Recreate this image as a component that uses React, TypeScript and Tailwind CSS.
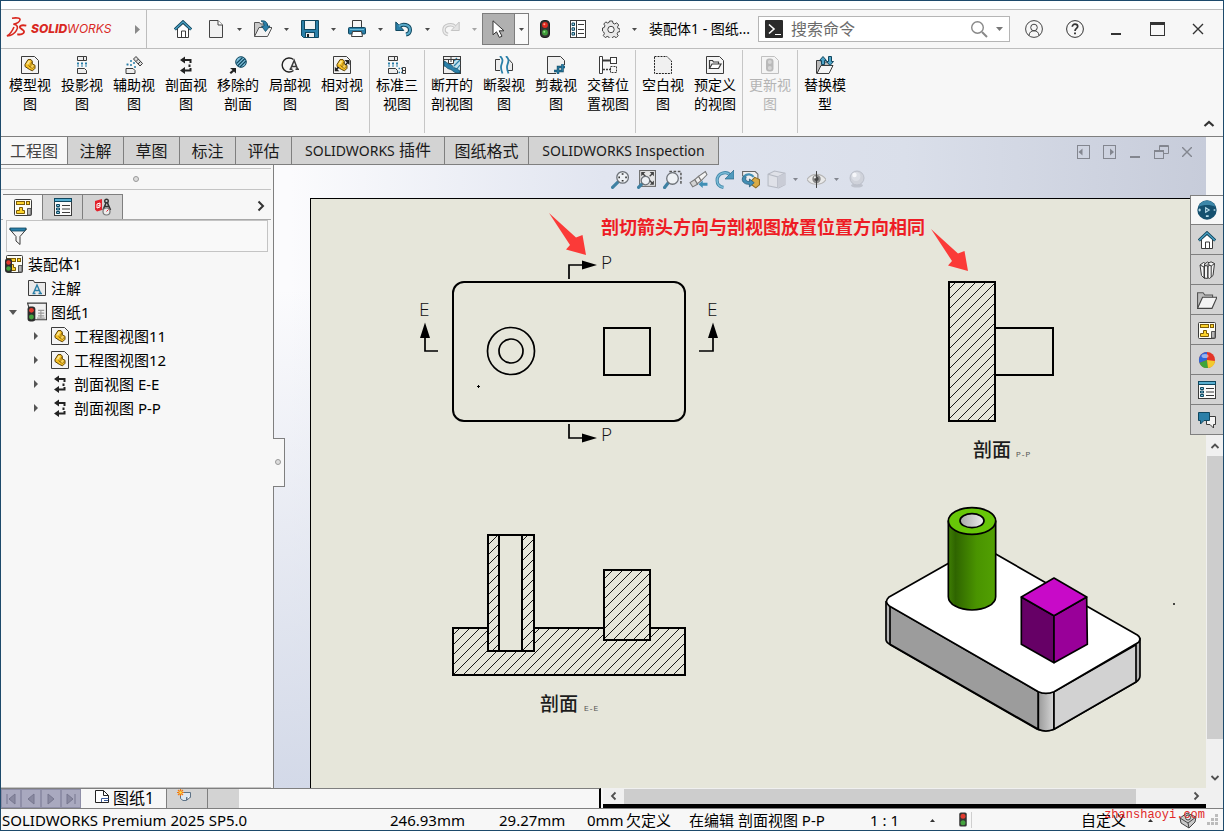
import React from "react";
import type { ReactNode } from "react";

const INK = "#3b3b3b";
const BLUE = "#2a7fa8";
const NAVY = "#10475f";

function Svg({ children, size = 18, className = "" }: { children: ReactNode; size?: number; className?: string }) {
  return (
    <svg width={size} height={size} viewBox="0 0 18 18" fill="none" aria-hidden="true" className={"shrink-0 " + className}>
      {children}
    </svg>
  );
}

function Caret({ color = "#4a4a4a" }: { color?: string }) {
  return (
    <svg width="5" height="3" viewBox="0 0 5 3" aria-hidden="true">
      <path d="M0 0h5L2.500 3z" fill={color} />
    </svg>
  );
}

/* ---------- shared icons ---------- */

const HouseIcon = () => (
  <Svg>
    <path d="M3.500 8.500V17.500h11V8.500L9 3.500z" fill="#fff" stroke={INK} />
    <path d="M7.500 17v-6h4v6" stroke={INK} />
    <path d="M.800 9.500L9 1.800l8.200 7.700" stroke={NAVY} strokeWidth="3" />
    <path d="M1.200 9.200L9 1.800l7.800 7.400" stroke="#4ca3c6" strokeWidth="1.200" />
  </Svg>
);

const TrafficIcon = () => (
  <Svg>
    <rect x="4.500" y="0.500" width="9" height="17" rx="3.500" fill="#333" stroke="#1d1d1d" />
    <circle cx="9" cy="5" r="2.900" fill="#e02a20" />
    <circle cx="8.300" cy="4.300" r="1" fill="#ff9f90" />
    <circle cx="9" cy="12.500" r="2.900" fill="#3f9b3a" />
    <circle cx="8.300" cy="11.800" r="1" fill="#9be08e" />
  </Svg>
);

const PartShape = () => (
  <>
    <path d="M4 8.500L7 3.600h3l1.300 1.600V8l2.700 1.300v3l-2.500 2.500L8.500 13.500 4 10.500z" fill="#f5bf22" stroke="#5e4206" />
    <path d="M7.300 4.800h2.200L7.500 8.500 5.200 8.300z" fill="#fde58a" />
    <path d="M10.800 8.300L9 11l2.500 1.500 2-2.500" fill="#f9d35a" stroke="#8a6308" strokeWidth=".7" />
    <path d="M7.500 8.800l1.300 2.200M11 5.500L9.500 8.500" stroke="#8a6308" strokeWidth=".8" />
  </>
);

const ModelViewIcon = () => (
  <Svg>
    <path d="M.5.500h13l4 4v13H.500z" fill="#f4f4f4" stroke={INK} />
    <PartShape />
  </Svg>
);

const SectionIcon = () => (
  <Svg>
    <path d="M7 4h6.500v3M12.500 8.500v2.500M13.500 12v2.500H7" stroke="#222" strokeWidth="2" />
    <path d="M3 4L8 .5v7zM3 14.500L8 11v7z" fill="#222" />
  </Svg>
);

const FormatShapes = () => (
  <>
    <rect x="2.500" y="3.500" width="8" height="3" fill="#fcd32b" stroke="#7d5c06" />
    <rect x="12.500" y="3.500" width="3" height="3" fill="#fcd32b" stroke="#7d5c06" />
    <path d="M5.500 9.500h3v3h2v3h-8v-3h3z" fill="#fcd32b" stroke="#7d5c06" />
    <path d="M13.500 17V10.500H17V17z" fill="#b5b5b5" stroke="#555" />
  </>
);

const FormatIcon = () => (
  <Svg>
    <rect x=".5" y="1.500" width="17" height="16" rx="1" fill="#fdfdf5" stroke={INK} />
    <FormatShapes />
  </Svg>
);

const AssemblyIcon = () => (
  <Svg>
    <rect x="1.500" y=".5" width="16" height="17" rx="1" fill="#fdfdf5" stroke={INK} />
    <FormatShapes />
    <rect x="0" y="3.500" width="7" height="14" rx="2.500" fill="#2d2d2d" />
    <circle cx="3.500" cy="7.500" r="2.200" fill="#e23a2e" />
    <circle cx="3.500" cy="13.500" r="2.200" fill="#44a23e" />
  </Svg>
);

const SheetIcon = () => (
  <Svg size={20}>
    <path d="M.500 1h17v15H5z" fill="#f0f0f0" stroke={INK} />
    <path d="M10 7.500h5.500M10 10h5.500M10 12.500h5.500M12.500 7.500v7M9 14.500h7" stroke="#999" />
    <rect x=".5" y="4" width="7" height="13.500" rx="2.500" fill="#2d2d2d" />
    <circle cx="4" cy="7.500" r="2.200" fill="#e23a2e" />
    <circle cx="4" cy="13.500" r="2.200" fill="#44a23e" />
  </Svg>
);

const AnnotationFolderIcon = () => (
  <Svg>
    <path d="M.5 16.500V1.500h5l1 2h11v13z" fill="#e9e9e9" stroke={INK} />
    <path d="M5.500 14L9 6l3.500 8M7 11.500h4M4.500 14.500h3M10.500 14.500h3.500" stroke={BLUE} strokeWidth="1.400" />
  </Svg>
);

const PropertyListIcon = () => (
  <Svg>
    <rect x=".5" y=".5" width="17" height="17" fill="#fafafa" stroke={INK} />
    <rect x="0" y="0" width="18" height="4" fill={NAVY} />
    <path d="M1 2h16" stroke="#58afd1" strokeWidth="2" />
    <path d="M2.500 6.500h3v2h-3zM2.500 10h3v2h-3zM2.500 13.500h3v2h-3z" fill="#7cc2dd" stroke={NAVY} />
    <path d="M8 7.500h8M8 11h8M8 14.500h8" stroke={INK} />
  </Svg>
);

/* ---------- title bar icons ---------- */

const NewIcon = () => (
  <Svg>
    <path d="M2.500.500h8.500l4.500 4.500v12.500h-13z" fill="#f1f1f1" stroke="#444" />
    <path d="M11 .5V5h4.500" fill="#fff" stroke="#444" />
  </Svg>
);

const OpenIcon = () => (
  <Svg>
    <path d="M.5 16.500V2.500h5l1 1.500h7v4" fill="#c9c9c9" stroke="#555" />
    <path d="M.5 16.500L5 7.500h13l-4.500 9z" fill="#f2f2f2" stroke="#555" />
    <path d="M7 1c4-.8 6.500 1 6.500 5h2.500l-4.500 5.500L7.500 6H10c0-3-1-4.300-3-5z" fill={BLUE} stroke={NAVY} strokeWidth=".8" />
  </Svg>
);

const SaveIcon = () => (
  <Svg>
    <path d="M.5.500h17v17h-15l-2-2z" fill={BLUE} stroke={NAVY} />
    <rect x="3.500" y=".5" width="11" height="9" fill="#f1f4f5" stroke={NAVY} />
    <rect x="4.500" y="12.500" width="9" height="5" fill="#eee" stroke={NAVY} />
    <rect x="6" y="14" width="2" height="3" fill="#222" />
  </Svg>
);

const PrintIcon = () => (
  <Svg>
    <path d="M4.500 8V.500h9V8" fill="#f5f5f5" stroke={INK} />
    <rect x=".5" y="7.500" width="17" height="6.500" rx="1" fill={BLUE} stroke={NAVY} />
    <path d="M2 9.500h14" stroke="#6fbcd9" />
    <path d="M3.500 16.500l1-5h9l1 5z" fill="#fff" stroke={INK} />
  </Svg>
);

const UndoIcon = () => (
  <Svg>
    <path d="M5 6.500c2-3 10-2 10 3.500 0 2.500-1.500 4-4 4.500" stroke={NAVY} strokeWidth="4" />
    <path d="M.800 2v8.500h8L3.500 4.500z" fill={BLUE} stroke={NAVY} />
    <path d="M4 6.500c3-3 11-2 11 3.500 0 2.500-1.500 4-4 4.500" stroke="#58a9c9" strokeWidth="2" />
  </Svg>
);

const RedoIcon = () => (
  <Svg>
    <path d="M13 6.500c-3-3-11-2-11 3.500 0 2.500 1.500 4 4 4.500" stroke="#c4c4c4" strokeWidth="3.500" />
    <path d="M17.200 2v8.500h-8z" fill="#e4e4e4" stroke="#c4c4c4" />
    <path d="M13 6.500c-3-3-11-2-11 3.500 0 2.500 1.500 4 4 4.500" stroke="#ebebeb" strokeWidth="1.500" />
  </Svg>
);

const ListIcon = () => (
  <Svg>
    <rect x="1.500" y=".5" width="15" height="17" fill="#fff" stroke={INK} />
    <path d="M7.500 1v16" stroke={INK} />
    <path d="M3 3h2.500v2.500H3zM3 7.800h2.500v2.500H3zM3 12.600h2.500v2.500H3z" fill="#9bd3e8" stroke={NAVY} />
    <path d="M9 4.500h6M9 9.500h6M9 13.500h6" stroke={INK} />
  </Svg>
);

const GearIcon = () => (
  <Svg>
    <path
      d="M7.500 1h3l.5 2.200 1.700.8L14.700 2.800l2 2.200-1.200 1.900.6 1.600 1.900.5v2.500l-2.100.6-.8 1.700 1.100 1.900-2 2-1.900-1.200-1.700.7-.6 1.800H7.500l-.6-1.900-1.700-.7-1.900 1.200-2-2 1.100-1.900-.7-1.700L.5 11V8l1.700-.5.7-1.700L1.800 4l2-2.100L5.600 3l1.500-.6z"
      fill="#e9e9e9"
      stroke="#444"
    />
    <circle cx="9" cy="9.500" r="3.200" fill="#f7f7f7" stroke="#444" />
  </Svg>
);

const CursorIcon = () => (
  <svg width="14" height="18" viewBox="0 0 14 18" aria-hidden="true">
    <path d="M1 .8v14l3.500-3 2.800 5.600 2.700-1.200-2.800-5.400H12z" fill="#fff" stroke="#333" />
  </svg>
);

/* ---------- ribbon icons ---------- */

const ProjectedIcon = () => (
  <Svg>
    <path d="M4.500.500h6v4h-6zM10.500.500h3v4h-3z" fill="#eee" stroke={INK} />
    <path d="M5 6.500v4M9 6.500v4M13 6.500v4" stroke={BLUE} strokeWidth="2" strokeDasharray="2 1" />
    <path d="M4.500 12.500h7l2 2v3h-9z" fill="#eee" stroke={INK} />
  </Svg>
);

const AuxiliaryIcon = () => (
  <Svg>
    <path d="M8.500 3L11 .5l6.500 7L15 10z" fill="#ddd" stroke={INK} />
    <path d="M11 5.500l2.500-2.500M13 8l2.500-2.500" stroke={INK} />
    <path d="M1.500 8.500h2M5 5h2M5 9h2M8 7h2M9 11h2M2.500 7.500v2" stroke={BLUE} strokeWidth="1.600" />
    <path d="M1 12.500h7l2 2v3H1z" fill="#eee" stroke={INK} />
  </Svg>
);

const RemovedIcon = () => (
  <Svg>
    <circle cx="12" cy="6" r="5.300" fill="#7fc0dc" stroke={NAVY} />
    <path d="M7.500 7.500L13.500 1.500M8.500 10L16 2.500M11 11L17 5" stroke={NAVY} strokeWidth="1.200" />
    <path d="M1 12h6v5.500L5 15.500 2 18l-1.500-1.500 3-2.500z" fill="#222" />
  </Svg>
);

const DetailIcon = () => (
  <Svg>
    <path d="M12.500 3.500A7 7 0 1 0 12.500 14.500" stroke="#222" strokeWidth="1.400" />
    <path d="M9.500 13L13.200 4.500 16.500 13M10.500 10.500h5M8.500 13.200h3M14.500 13.200h3.500" stroke={INK} strokeWidth="1.500" />
  </Svg>
);

const RelativeIcon = () => (
  <Svg>
    <path d="M.5.500h13l4 4v13H.500z" fill="#f4f4f4" stroke={INK} />
    <PartShape />
    <path d="M11.500 4h5v5l-1.700-1.500-2 2-1-1 2-2zM1.800 10.800l1.500 1.500 1.700-1.700 1.200 1.200-1.700 1.700L6.300 15.300H1.800z" fill="#222" />
  </Svg>
);

const StandardThreeIcon = () => (
  <Svg>
    <path d="M.5.500h6v4h-6zM6.500.500h3v4h-3z" fill="#eee" stroke={INK} />
    <path d="M1 6.500v4M5 6.500v4M9 6.500v4" stroke={BLUE} strokeWidth="2" strokeDasharray="2 1" />
    <path d="M.5 12.500h7l2 2v3h-9z" fill="#eee" stroke={INK} />
    <path d="M10.500 12.500h4M10.500 16.500h4" stroke={BLUE} strokeWidth="1.500" strokeDasharray="1.500 1" />
    <path d="M14.500 11.500h3v6h-3zM14.500 14.500h3" stroke={INK} />
  </Svg>
);

const BrokenSectionIcon = () => (
  <Svg>
    <rect x=".5" y=".5" width="17" height="17" fill="#eee" stroke={INK} />
    <path d="M11 4h6v12l-3-2-4-4z" fill="#c2e2ee" />
    <path d="M11 10l6-6M13 14l4-5M14 2l-3 3" stroke={BLUE} strokeWidth="1.200" />
    <path d="M1 5c2 0 3 3 6 3 2 0 3 4 5 4s3 2 5 3v2h-3C10 16.500 9 13 6 13 3.500 12.500 3 10 1 10z" fill={BLUE} stroke={NAVY} strokeWidth=".7" />
    <path d="M5.500 3.500v4h5v-4" fill="#fff" stroke={INK} />
    <path d="M1 3.500h16M8 1v5" stroke={INK} />
  </Svg>
);

const BreakIcon = () => (
  <Svg>
    <path d="M5 3.500H.500v11H5M13 3.500h1l3.500 4v7H13" fill="#eee" stroke={INK} />
    <path d="M5 0c3 3 3 4.500 1.500 8.500C5.500 11 6 14 7.500 17.500M11 0c3 3 3 4.500 1.500 8.500C11.500 11 12 14 13.500 17.500" stroke={BLUE} strokeWidth="1.800" />
  </Svg>
);

const CropIcon = () => (
  <Svg>
    <path d="M.5.500h13l4 4v13H.500z" fill="#f0f0f0" />
    <path d="M9 17.500H.500V.500h13l4 4V9" stroke={INK} />
    <path d="M7 15h8.500V8M11 18v-7H18" stroke={NAVY} strokeWidth="2.400" />
    <path d="M7 15h8.500V8M11 18v-7H18" stroke={BLUE} strokeWidth="1.200" />
  </Svg>
);

const AlternateIcon = () => (
  <Svg>
    <path d="M.5.500h3v17h-3z" fill="#fff" stroke={INK} />
    <path d="M3.500 4.500H12" stroke={INK} strokeWidth="2" />
    <rect x="11.500" y="1.500" width="6" height="6" fill="#fff" stroke={INK} />
    <path d="M4 13.500h8" stroke={INK} strokeWidth="1.500" strokeDasharray="2 1" />
    <rect x="11.500" y="10.500" width="6" height="6" stroke={INK} strokeDasharray="2 1" />
  </Svg>
);

const EmptyViewIcon = () => (
  <Svg>
    <path d="M.5.500h12.500l4.500 4.500v12.500H.500z" fill="#f0f0f0" stroke="#222" strokeDasharray="2 1" />
  </Svg>
);

const PredefinedIcon = () => (
  <Svg>
    <path d="M.5.500h13l4 4v13H.500z" fill="#f4f4f4" stroke={INK} />
    <path d="M3.500 12.500v-8h3l1 1.500h5v2" stroke={INK} strokeWidth="1.200" />
    <path d="M3.500 12.500L6 8h9l-2.500 4.500z" fill="#fff" stroke={INK} strokeWidth="1.200" />
  </Svg>
);

const UpdateIcon = () => (
  <Svg>
    <path d="M.5.500h13l4 4v13H.500z" fill="#f4f4f4" stroke="#c0c0c0" />
    <rect x="5" y="2.500" width="7.500" height="13" rx="3" fill="#b9b9b9" />
    <circle cx="8.800" cy="6" r="2" fill="#d5d5d5" />
    <circle cx="8.800" cy="12" r="2" fill="#d5d5d5" />
  </Svg>
);

const ReplaceIcon = () => (
  <Svg>
    <path d="M.5 17.500V4.500h4l1 1.500h8v3" fill="#bbb" stroke={INK} />
    <path d="M1 17.500L5 9.500h12l-4 8z" fill="#f4f4f4" stroke={INK} />
    <path d="M3.500 4.500L7 .5l3.500 4h-2v4h-3v-4z" fill="#4ea3c6" stroke={NAVY} />
    <path d="M10.500 5.500l3.500 4 3.500-4h-2v-5h-3v5z" fill="#4ea3c6" stroke={NAVY} />
  </Svg>
);

type Command = { label: string; icon: ReactNode; disabled?: boolean };

const ribbonGroups: Command[][] = [
  [
    { label: "模型视图", icon: <ModelViewIcon /> },
    { label: "投影视图", icon: <ProjectedIcon /> },
    { label: "辅助视图", icon: <AuxiliaryIcon /> },
    { label: "剖面视图", icon: <SectionIcon /> },
    { label: "移除的剖面", icon: <RemovedIcon /> },
    { label: "局部视图", icon: <DetailIcon /> },
    { label: "相对视图", icon: <RelativeIcon /> },
  ],
  [{ label: "标准三视图", icon: <StandardThreeIcon /> }],
  [
    { label: "断开的剖视图", icon: <BrokenSectionIcon /> },
    { label: "断裂视图", icon: <BreakIcon /> },
    { label: "剪裁视图", icon: <CropIcon /> },
    { label: "交替位置视图", icon: <AlternateIcon /> },
  ],
  [
    { label: "空白视图", icon: <EmptyViewIcon /> },
    { label: "预定义的视图", icon: <PredefinedIcon /> },
  ],
  [{ label: "更新视图", icon: <UpdateIcon />, disabled: true }],
  [{ label: "替换模型", icon: <ReplaceIcon /> }],
];

function Logo() {
  return (
    <div className="flex items-center text-[#d9281f]">
      <svg width="21" height="20" viewBox="0 0 21 20" fill="none" stroke="currentColor" aria-hidden="true" className="mb-1">
        <path d="M6 1.200C10 .5 14.300.800 14 2.800 13.600 4.700 10.500 6.500 7.500 7.300" strokeWidth="1.600" />
        <path d="M7.500 7.300C11.500 7.800 12.500 10.300 10.500 13.300 8.500 16.600 4.500 18.700 1 19 3.500 17.500 6.500 13.500 8 10" strokeWidth="1.600" />
        <path d="M20.300 8.600C16.500 7.800 14.200 8.300 13.800 10s4.700 2.600 4.300 4.900-3.600 3-6.800 2.400" strokeWidth="1.900" />
      </svg>
      <span className="ml-1 font-['Inter','Open_Sans',sans-serif] text-[12px] italic leading-5">
        <span className="font-extrabold">SOLID</span>
        <span className="font-normal">WORKS</span>
      </span>
    </div>
  );
}

function IconButton({ label, children, className, disabled }: { label: string; children: ReactNode; className: string; disabled?: boolean }) {
  return (
    <button type="button" aria-label={label} disabled={disabled} className={"flex shrink-0 items-center justify-center " + className}>
      {children}
    </button>
  );
}

function TitleBar() {
  return (
    <header className="flex h-10 shrink-0 items-stretch border-y border-[#bdbdbd] bg-[#f7f7f7]">
      <div className="flex w-[146px] shrink-0 items-center justify-between border-r border-[#bdbdbd] pl-[5px]">
        <Logo />
        <IconButton label="展开菜单" className="w-[18px]">
          <svg width="5" height="9" viewBox="0 0 5 9" aria-hidden="true">
            <path d="M0 0l5 4.500L0 9z" fill="#8a8a8a" />
          </svg>
        </IconButton>
      </div>
      <div className="flex shrink-0 items-stretch pl-[18px]">
        <IconButton label="主页" className="w-9"><HouseIcon /></IconButton>
        <IconButton label="新建" className="w-[30px]"><NewIcon /></IconButton>
        <IconButton label="新建选项" className="w-4"><Caret /></IconButton>
        <IconButton label="打开" className="w-[31px]"><OpenIcon /></IconButton>
        <IconButton label="打开选项" className="w-4"><Caret /></IconButton>
        <IconButton label="保存" className="w-[31px]"><SaveIcon /></IconButton>
        <IconButton label="保存选项" className="w-4"><Caret /></IconButton>
        <IconButton label="打印" className="w-[31px]"><PrintIcon /></IconButton>
        <IconButton label="打印选项" className="w-4"><Caret /></IconButton>
        <IconButton label="撤消" className="w-[31px]"><UndoIcon /></IconButton>
        <IconButton label="撤消选项" className="w-4"><Caret /></IconButton>
        <IconButton label="重做" className="w-[31px]" disabled><RedoIcon /></IconButton>
        <IconButton label="重做选项" className="w-4"><Caret color="#a5a5a5" /></IconButton>
        <div className="my-[3px] flex w-[47px] border border-[#7d7d7d]">
          <IconButton label="选择" className="w-8 border-r border-[#7d7d7d] bg-[#b0b0b0]"><CursorIcon /></IconButton>
          <IconButton label="选择选项" className="flex-1 bg-[#fafafa]"><Caret /></IconButton>
        </div>
        <IconButton label="重建模型" className="w-8"><TrafficIcon /></IconButton>
        <IconButton label="文件属性" className="w-[34px]"><ListIcon /></IconButton>
        <IconButton label="选项" className="w-8"><GearIcon /></IconButton>
        <IconButton label="更多选项" className="w-[15px]"><Caret /></IconButton>
      </div>
      <h1 className="ml-[7px] w-[109px] shrink-0 self-center whitespace-nowrap text-[14px] leading-5 text-black">装配体1 - 图纸...</h1>
      <form className="my-1.5 flex w-[252px] items-center border border-[#b5b5b5] bg-white px-1.5" role="search">
        <svg width="18" height="18" viewBox="0 0 18 18" fill="none" aria-hidden="true">
          <rect width="18" height="18" rx="1" fill="#2b2b2b" />
          <path d="M4 4.500l5 4.500-5 4.500" stroke="#fff" strokeWidth="1.600" />
          <path d="M10 14.500h6" stroke="#fff" />
        </svg>
        <input
          type="text"
          aria-label="搜索命令"
          placeholder="搜索命令"
          className="ml-2 w-full min-w-0 flex-1 bg-transparent text-[16px] leading-6 text-black outline-none placeholder:text-[#6b6b6b]"
        />
        <IconButton label="搜索" className="w-4">
          <Svg>
            <circle cx="7.500" cy="7.500" r="5.800" stroke="#888" strokeWidth="1.400" />
            <path d="M12 12l5 5" stroke="#888" strokeWidth="2" />
          </Svg>
        </IconButton>
        <IconButton label="搜索选项" className="-mr-1 ml-1 w-4">
          <svg width="7" height="4" viewBox="0 0 7 4" aria-hidden="true"><path d="M0 0h7L3.500 4z" fill="#777" /></svg>
        </IconButton>
      </form>
      <div className="ml-auto flex pr-[5px]">
        <IconButton label="登录" className="w-[41px]">
          <Svg>
            <circle cx="9" cy="9" r="8.400" stroke="#444" />
            <circle cx="9" cy="7.500" r="3.300" stroke="#444" />
            <path d="M4 15.500c.5-3.300 2-4.700 5-4.700s4.500 1.400 5 4.700" stroke="#444" />
          </Svg>
        </IconButton>
        <IconButton label="帮助" className="w-[41px]">
          <Svg>
            <circle cx="9" cy="9" r="8.400" stroke="#333" />
            <path d="M6.300 6.800c0-3.600 5.400-3.300 5.400-.2C11.700 8.500 9 8.500 9 11" stroke="#333" strokeWidth="1.700" />
            <path d="M9 12.500v1.800" stroke="#333" strokeWidth="1.900" />
          </Svg>
        </IconButton>
        <IconButton label="最小化" className="w-[41px]">
          <Svg><path d="M4 14h10" stroke="#333" strokeWidth="2" /></Svg>
        </IconButton>
        <IconButton label="最大化" className="w-[41px]">
          <Svg>
            <rect x="2.500" y="2.500" width="14" height="13" stroke="#333" />
            <path d="M2 3.500h15" stroke="#333" strokeWidth="3" />
          </Svg>
        </IconButton>
        <IconButton label="关闭" className="w-[41px]">
          <Svg><path d="M4 4l10 10M14 4L4 14" stroke="#333" strokeWidth="1.400" /></Svg>
        </IconButton>
      </div>
    </header>
  );
}

function Ribbon() {
  return (
    <div role="toolbar" aria-label="工程图命令" className="flex h-[88px] shrink-0 items-stretch border-b border-[#7f7f7f] bg-[#f7f7f7] pl-[3px]">
      {ribbonGroups.map((group, index) => (
        <div key={group[0].label} className="flex">
          {index > 0 && <div className="mx-px mb-[3px] mt-px w-px bg-[#c6c6c6]" />}
          {group.map((command) => (
            <button
              key={command.label}
              type="button"
              disabled={command.disabled}
              className={
                "flex w-[52px] flex-col items-center px-[5px] pt-[7px] text-center text-[14px] leading-[19px] " +
                (command.disabled ? "text-[#b4b4b4]" : "text-black")
              }
            >
              {command.icon}
              <span className="mt-px break-all">{command.label}</span>
            </button>
          ))}
        </div>
      ))}
      <IconButton label="折叠功能区" className="mb-2 ml-auto mr-2 self-end">
        <svg width="12" height="8" viewBox="0 0 12 8" fill="none" aria-hidden="true">
          <path d="M1.500 6L6 2l4.500 4" stroke="#333" strokeWidth="2.200" />
        </svg>
      </IconButton>
    </div>
  );
}

const commandTabs: { latin?: string; label?: string; width: string }[] = [
  { label: "工程图", width: "w-[66px]" },
  { label: "注解", width: "w-14" },
  { label: "草图", width: "w-14" },
  { label: "标注", width: "w-14" },
  { label: "评估", width: "w-14" },
  { latin: "SOLIDWORKS", label: " 插件", width: "w-[153px]" },
  { label: "图纸格式", width: "w-[84px]" },
  { latin: "SOLIDWORKS Inspection", width: "w-[190px]" },
];

function TabRow() {
  return (
    <div className="flex h-7 shrink-0 items-stretch">
      <nav role="tablist" aria-label="命令管理器" className="flex border-r border-[#7f7f7f]">
        {commandTabs.map((tab, index) => (
          <button
            key={tab.label ?? tab.latin}
            type="button"
            role="tab"
            aria-selected={index === 0}
            className={
              "whitespace-nowrap border-b border-[#7f7f7f] text-[16px] leading-6 " +
              tab.width +
              (index === 0 ? " bg-[#f7f7f7] text-[#444]" : " border-l bg-[#d3d3d3] text-[#1a1a1a]")
            }
          >
            {tab.latin && <span className="text-[14px]">{tab.latin}</span>}
            {tab.label}
          </button>
        ))}
      </nav>
      <div className="ml-auto flex items-center pr-1.5 pt-0.5">
        <IconButton label="上一窗格" className="w-[26px]">
          <svg width="13" height="14" viewBox="0 0 13 14" fill="none" aria-hidden="true">
            <rect x=".5" y=".5" width="12" height="13" stroke="#83868f" /><path d="M5.500 3.500v7L1.500 7z" fill="#83868f" />
          </svg>
        </IconButton>
        <IconButton label="下一窗格" className="w-[26px]">
          <svg width="13" height="14" viewBox="0 0 13 14" fill="none" aria-hidden="true">
            <rect x=".5" y=".5" width="12" height="13" stroke="#83868f" /><path d="M7 3.500v7L11 7z" fill="#83868f" />
          </svg>
        </IconButton>
        <IconButton label="最小化文档" className="w-[26px]">
          <svg width="10" height="14" viewBox="0 0 10 14" aria-hidden="true"><path d="M0 11h10v2H0z" fill="#83868f" /></svg>
        </IconButton>
        <IconButton label="还原文档" className="w-[26px]">
          <svg width="15" height="14" viewBox="0 0 15 14" fill="none" stroke="#83868f" aria-hidden="true">
            <path d="M5.500 5V.500h9v8H10" /><path d="M5.500 1.500h9" /><rect x=".5" y="5.500" width="9" height="8" /><path d="M.5 6.500h9" />
          </svg>
        </IconButton>
        <IconButton label="关闭文档" className="w-[26px]">
          <svg width="10" height="10" viewBox="0 0 10 10" aria-hidden="true"><path d="M0 0l10 10M10 0L0 10" stroke="#83868f" strokeWidth="1.400" /></svg>
        </IconButton>
      </div>
    </div>
  );
}

type Node = { label: string; icon: ReactNode; level: 0 | 1 | 2; toggle?: "open" | "closed" };

const tree: Node[] = [
  { label: "装配体1", icon: <AssemblyIcon />, level: 0 },
  { label: "注解", icon: <AnnotationFolderIcon />, level: 1 },
  { label: "图纸1", icon: <SheetIcon />, level: 1, toggle: "open" },
  { label: "工程图视图11", icon: <ModelViewIcon />, level: 2, toggle: "closed" },
  { label: "工程图视图12", icon: <ModelViewIcon />, level: 2, toggle: "closed" },
  { label: "剖面视图 E-E", icon: <SectionIcon />, level: 2, toggle: "closed" },
  { label: "剖面视图 P-P", icon: <SectionIcon />, level: 2, toggle: "closed" },
];

const DisplayIcon = () => (
  <Svg>
    <path d="M1 3l7-2v11l-5 1.500-2-2z" fill="#e3212b" />
    <path d="M3 6l3-1M3 6v4l3-1V5M4 8l2-1" stroke="#fff" />
    <circle cx="12.500" cy="3" r="1.800" stroke="#333" strokeWidth="1.400" />
    <path d="M12 5L9 12M13.500 5l3 7M10.500 8.500h4" stroke="#333" strokeWidth="1.600" />
    <circle cx="12.500" cy="13.500" r="3.500" fill="#eee" stroke="#777" strokeWidth="1.200" />
    <path d="M12.500 13.500l2-2" stroke="#e3212b" />
  </Svg>
);

function FeaturePanel() {
  return (
    <aside className="flex w-[273px] shrink-0 flex-col border-r border-[#7f7f7f] bg-[#f7f7f7]">
      <div className="mr-0.5 h-1 border-b border-[#c4c4c4]" />
      <div className="mr-0.5 flex h-[21px] items-center justify-center border-b border-[#c4c4c4]">
        <span className="size-1.5 rounded-full border border-[#999] bg-[#ddd]" />
      </div>
      <div className="mr-0.5 mt-1 flex h-[26px] items-stretch border-b border-[#a8a8a8]">
        <div role="tablist" aria-label="管理器" className="ml-0.5 flex">
          <button type="button" role="tab" aria-selected="true" aria-label="设计树" className="-mb-px flex w-[39px] items-center justify-center border-t border-[#7f7f7f] bg-[#f7f7f7] pb-0.5">
            <FormatIcon />
          </button>
          <button type="button" role="tab" aria-selected="false" aria-label="属性管理器" className="flex w-10 items-center justify-center border-l border-t border-[#7f7f7f] bg-[#d3d3d3]">
            <PropertyListIcon />
          </button>
          <button type="button" role="tab" aria-selected="false" aria-label="显示管理器" className="flex w-[41px] items-center justify-center border-x border-t border-[#7f7f7f] bg-[#d3d3d3]">
            <DisplayIcon />
          </button>
        </div>
        <IconButton label="更多" className="ml-auto w-5 pb-0.5">
          <svg width="8" height="12" viewBox="0 0 8 12" fill="none" aria-hidden="true">
            <path d="M1.500 1.500L6 6l-4.500 4.500" stroke="#333" strokeWidth="2" />
          </svg>
        </IconButton>
      </div>
      <label className="mx-[5px] flex h-8 shrink-0 items-center border border-[#c4c4c4] bg-[#f9f9f9] pl-0.5">
        <Svg>
          <path d="M.5 2h17L11 9.500v8L7 14V9.500z" fill="#f4f4f4" stroke={INK} />
          <path d="M.800 1h16.400l-1.500 3H2.300z" fill={BLUE} stroke={NAVY} strokeWidth=".8" />
        </Svg>
        <input type="text" aria-label="过滤" className="min-w-0 flex-1 bg-transparent px-1 text-[14px] outline-none" />
      </label>
      <ul className="pl-[3px] text-[15px] leading-6 text-black">
        {tree.map((node) => (
          <li key={node.label} className={"flex h-6 items-center " + (node.level === 2 ? "pl-[23px]" : "")}>
            {node.level > 0 && (
              <span className="flex w-[23px] pl-[5px]">
                {node.toggle && (
                  <button type="button" aria-label={(node.toggle === "open" ? "折叠 " : "展开 ") + node.label}>
                    {node.toggle === "open" ? (
                      <svg width="8" height="5" viewBox="0 0 8 5" aria-hidden="true"><path d="M0 0h8L4 5z" fill="#555" /></svg>
                    ) : (
                      <svg width="8" height="8" viewBox="0 0 8 8" aria-hidden="true"><path d="M2 0l4 4-4 4z" fill="#555" /></svg>
                    )}
                  </button>
                )}
              </span>
            )}
            <span className="flex w-5 justify-center">{node.icon}</span>
            <span className="ml-1">{node.label}</span>
          </li>
        ))}
      </ul>
      <div className="mr-0.5 mt-auto h-px bg-[#c4c4c4]" />
    </aside>
  );
}

/* ---------- heads-up view toolbar ---------- */

const Lens = ({ cx = 11, cy = 7, r = 5.5 }: { cx?: number; cy?: number; r?: number }) => (
  <>
    <path d={`M1.500 16.500L${cx - r + 1.5} ${cy + r - 1.5}`} stroke="#3f81a3" strokeWidth="3" strokeLinecap="round" />
    <circle cx={cx} cy={cy} r={r} fill="#eef1f5" stroke="#6d7278" strokeWidth="1.200" />
  </>
);

function ViewToolbar() {
  return (
    <div role="toolbar" aria-label="视图" className="-ml-9 flex h-[33px] shrink-0 items-center justify-center pb-[5px]">
      <IconButton label="局部放大" className="w-[26px]">
        <Svg size={19}><Lens /><path d="M11 3v1.500M11 9.500V11M7 7h1.500M13.500 7H15" stroke="#333" strokeWidth="1.700" /></Svg>
      </IconButton>
      <IconButton label="整屏显示全图" className="w-[26px]">
        <Svg size={19}>
          <rect x="2.500" y=".5" width="15" height="15" fill="#e6e6e6" stroke="#666" />
          <path d="M4 2h4L4 6zM16 2h-4l4 4zM16 14h-4l4-4z" fill="#444" /><path d="M5 3l3 3M15 3l-3 3M15 13l-3-3" stroke="#444" strokeWidth="1.300" />
          <Lens cx={8} cy={10} r={4} />
        </Svg>
      </IconButton>
      <IconButton label="放大选取范围" className="w-[26px]">
        <Svg size={19}><path d="M6 1.500h11v12" stroke="#555" strokeWidth="1.400" strokeDasharray="2.500 1.500" /><Lens cx={9} cy={8} /></Svg>
      </IconButton>
      <IconButton label="上一视图" className="w-[26px]">
        <Svg size={19}>
          <path d="M1 12l2.500 4L8 13.500 5.500 9z" fill="#d4d4d4" stroke="#777" /><path d="M5.500 9L8 13l3.500-3L9 6z" fill="#eee" stroke="#777" /><path d="M9 6l2.500 4L17 4.500 15.500 1.500z" fill="#f4f4f4" stroke="#777" />
          <path d="M9 13.500l4-3.500v2h4.500v3H13v2z" fill="#3f8fb5" />
        </Svg>
      </IconButton>
      <IconButton label="旋转视图" className="w-[26px]">
        <Svg size={19}>
          <path d="M14.500 5C11 .5 2 2.500 2 10c0 4 3 6 6 6.500" stroke="#4287a8" strokeWidth="3" />
          <path d="M14.500 5C11 .5 2 2.500 2 10c0 4 3 6 6 6.500" stroke="#7bbcd8" strokeWidth="1.400" />
          <path d="M18 0v8.500H9.500z" fill="#4f9abd" stroke="#326d8c" strokeWidth=".7" />
        </Svg>
      </IconButton>
      <IconButton label="3D 工程图视图" className="w-[26px]">
        <Svg size={19}>
          <path d="M1.500 6V1.500h12L16 4v9" fill="#eee" stroke="#666" />
          <path d="M10 10l3-3 4.500 2v5L14 17l-4-3z" fill="#d9ab45" stroke="#8b6b24" />
          <path d="M2.500 5.500C-1 10 3 14 8 13.500V16l4.500-4L8 8.500V11c-3 0-4.500-2-3-4.500z" fill="#438fb4" stroke="#28607d" strokeWidth=".8" />
          <path d="M3 6c3-3 7-2 9 .5" stroke="#438fb4" strokeWidth="2" />
        </Svg>
      </IconButton>
      <IconButton label="显示样式" className="w-[26px]">
        <Svg size={19}>
          <path d="M1 4l6-3 10 2v11l-6 3-10-2z" fill="#dfe1e8" stroke="#b6bac4" /><path d="M1 4l9 2.500L17 3M10 6.500V17" stroke="#b6bac4" /><path d="M10 6.500L17 3v11l-7 3z" fill="#c9ccd6" />
        </Svg>
      </IconButton>
      <IconButton label="显示样式选项" className="w-3"><Caret color="#83868f" /></IconButton>
      <IconButton label="隐藏/显示项目" className="w-[30px]">
        <Svg size={19}>
          <path d="M0 9c4-6.500 14-6.500 18 0-4 6-14 6-18 0z" fill="#e9e9e9" stroke="#b5b5b5" /><circle cx="9" cy="8.500" r="4" fill="#8a8a8a" /><circle cx="9" cy="8.500" r="2" fill="#444" /><path d="M9 1v16" stroke="#444" />
          <circle cx="7.500" cy="7" r="1" fill="#eee" />
        </Svg>
      </IconButton>
      <IconButton label="隐藏/显示选项" className="w-2.5"><Caret color="#83868f" /></IconButton>
      <IconButton label="编辑外观" className="w-8">
        <Svg>
          <ellipse cx="9" cy="15.500" rx="6" ry="2" fill="#bfc3cd" />
          <circle cx="9" cy="8" r="7" fill="#cfd2da" stroke="#bcc0ca" /><circle cx="8" cy="6.500" r="4.500" fill="#dcdfe6" /><circle cx="6.500" cy="5" r="2.200" fill="#f6f7fa" />
        </Svg>
      </IconButton>
    </div>
  );
}

function Drawing() {
  return (
    <svg width="895" height="589" viewBox="311 199 895 589" fill="none" className="block font-['Open_Sans','Noto_Sans_CJK_SC',sans-serif]" role="img" aria-label="工程图 图纸1">
      <defs>
        <pattern id="hatch" patternUnits="userSpaceOnUse" width="10" height="10" x="3" y="5">
          <path d="M-1 11L11 -1M-1 1L1 -1M9 11L11 9" stroke="#000" strokeWidth=".9" />
        </pattern>
        <pattern id="hatchShift" patternUnits="userSpaceOnUse" width="10" height="10" x="8" y="5">
          <path d="M-1 11L11 -1M-1 1L1 -1M9 11L11 9" stroke="#000" strokeWidth=".9" />
        </pattern>
        <linearGradient id="tube"><stop offset="0" stopColor="#3f7f04" /><stop offset=".15" stopColor="#2f6500" /><stop offset=".6" stopColor="#4a9400" /><stop offset="1" stopColor="#52a003" /></linearGradient>
        <linearGradient id="bore"><stop offset="0" stopColor="#a8a8a8" /><stop offset="1" stopColor="#ececec" /></linearGradient>
        <linearGradient id="corner"><stop offset="0" stopColor="#9a9a9a" /><stop offset="1" stopColor="#d6d6d6" /></linearGradient>
        <path id="callout" d="M0 0l27 24.500 6.500-2.500L37 42l-20-5.500 4-4.500z" fill="#fb3a38" />
      </defs>

      <g stroke="#000" strokeWidth="2">
        <rect x="453" y="282" width="232" height="139" rx="11" />
        <circle cx="511" cy="351" r="23.500" strokeWidth="1.700" />
        <circle cx="511" cy="351" r="12" strokeWidth="1.700" />
        <rect x="604" y="328" width="46" height="47" />
        <path d="M569 279v-14h14M569 424v14h14M425 337v14h13M713 337v14h-14" strokeWidth="1.700" />
      </g>
      <path d="M582 260.500l15 4.500-15 4.500zM582 433.500l15 4.500-15 4.500zM420 338l5-15.500 5 15.500zM708 338l5-15.500 5 15.500z" fill="#000" />
      <path d="M477 386h3v1h-3zM478 385h1v3h-1z" fill="#000" />
      <path d="M1173 603h2v2h-2z" fill="#000" opacity=".7" />
      <g fill="#111" fontSize="19" fontWeight="300">
        <text x="601" y="269">P</text>
        <text x="601" y="441">P</text>
        <text x="419" y="316">E</text>
        <text x="707" y="316">E</text>
      </g>

      <g stroke="#000" strokeWidth="2">
        <rect x="949" y="282" width="46" height="139" fill="url(#hatch)" />
        <path d="M995 328h58v47h-58" />
        <path d="M453 628h35v23h46v-23h70v12h46v-12h35v47H453z" fill="url(#hatch)" />
        <path d="M488 535h11v116h-11zM522 535h12v116h-12z" fill="url(#hatchShift)" />
        <path d="M499 535h23M499 651h23" />
        <rect x="604" y="570" width="46" height="70" fill="url(#hatchShift)" />
      </g>

      <use href="#callout" x="549" y="213" />
      <use href="#callout" x="931" y="229" />
      <text x="601" y="234" fontSize="18" fontWeight="700" fill="#ee1c25">剖切箭头方向与剖视图放置位置方向相同</text>
      <g fill="#1c1c1c" fontSize="19" fontWeight="500">
        <text x="973" y="457">剖面</text>
        <text x="540" y="711">剖面</text>
      </g>
      <g fill="#555" fontSize="8" fontFamily="Liberation Mono, monospace">
        <text x="1016" y="457">P-P</text>
        <text x="584" y="711">E-E</text>
      </g>

      <g transform="translate(860 480) scale(.33333)" stroke="#000" strokeWidth="5" strokeLinejoin="round">
        <path d="M78 365V480Q79 488 92 495L532 748Q557 758 582 748L828 606Q840 598 840 588V475z" fill="#b4b4b4" />
        <path d="M90 378L535 635V748L90 493z" fill="#9c9c9c" />
        <path d="M535 635Q557 643 582 635V748Q557 758 535 748z" fill="url(#corner)" />
        <path d="M582 635L828 494V606L582 748z" fill="#d2d2d2" />
        <path d="M86 352L345 205Q361 196 377 205L832 465Q845 474 836 487L582 635Q557 645 535 635L88 378Q72 366 86 352z" fill="#fff" />
        <path d="M265 123V350A71 40 0 0 0 407 350V123z" fill="url(#tube)" />
        <ellipse cx="336" cy="123" rx="71" ry="40" fill="#67c608" />
        <ellipse cx="336" cy="122" rx="36" ry="21" fill="url(#bore)" />
        <path d="M484 351L582 407V548L484 493z" fill="#660066" />
        <path d="M680 351L582 407V548L682 493z" fill="#990099" />
        <path d="M582 294L680 351L582 407L484 351z" fill="#c80ac8" />
      </g>
    </svg>
  );
}

const Chevron = ({ d }: { d: string }) => (
  <svg width="10" height="10" viewBox="0 0 10 10" fill="none" aria-hidden="true">
    <path d={d} stroke="#505050" strokeWidth="1.800" />
  </svg>
);

function TaskPane() {
  const items: { label: string; icon: ReactNode }[] = [
    {
      label: "3DEXPERIENCE",
      icon: (
        <Svg size={20}>
          <circle cx="9" cy="9" r="8.700" fill="#15506f" /><path d="M1.500 6a8 8 0 0 1 15 0c-4-2-11-2-15 0z" fill="#3d87a9" />
          <path d="M7.800 7l3.200 2-3.200 2z" stroke="#b9dcea" /><path d="M3 8l-1 1 1 1M15 9h1.500M8 14.500h2.500" stroke="#b9dcea" strokeWidth="1.400" />
        </Svg>
      ),
    },
    { label: "资源", icon: <HouseIcon /> },
    {
      label: "设计库",
      icon: (
        <Svg>
          <path d="M2 4l3.500-2.500 3 1.500v13L6.500 17.500 3.500 14.500z" fill="#f4f4f4" stroke={INK} />
          <path d="M6.500 3l3-2 3 1.500V15l-3 2.500-3-.500z" fill="#f4f4f4" stroke={INK} />
          <path d="M10 2.500L13 .800l3.500 1.700L15 14.500 11.500 17.500 9.800 16.500z" fill="#f4f4f4" stroke={INK} />
          <path d="M2 4l4 2v11M6 6l2.500-2M9.800 5.500V17M9.800 5.500L7 4M9.800 5.500L12 4M13.200 5V16M13.200 5L16.500 2.500M13.200 5L10.500 3.500" stroke={INK} />
        </Svg>
      ),
    },
    {
      label: "文件探索器",
      icon: (
        <Svg size={20}>
          <path d="M.5 16V2.500h5l1.500 2h7V7" fill="#bdbdbd" stroke="#555" /><path d="M.5 16.500L5 6.500h13l-4.500 10z" fill="#f4f4f4" stroke="#444" />
        </Svg>
      ),
    },
    { label: "视图调色板", icon: <FormatIcon /> },
    {
      label: "外观",
      icon: (
        <Svg>
          <circle cx="9" cy="9" r="8" fill="#e33427" /><path d="M9 9V1A8 8 0 0 0 1.500 12z" fill="#2f67d8" /><path d="M9 9L1.500 12A8 8 0 0 0 10 17z" fill="#3ca63a" /><path d="M9 9l1 8a8 8 0 0 0 7-7z" fill="#f2ca2e" />
          <ellipse cx="7" cy="5" rx="3.500" ry="2" fill="#fff" opacity=".5" />
        </Svg>
      ),
    },
    { label: "自定义属性", icon: <PropertyListIcon /> },
    {
      label: "论坛",
      icon: (
        <Svg>
          <path d="M8.500 5.500h9v8h-2V17l-3.500-3.500H8.500z" fill="#f4f4f4" stroke={INK} /><path d="M.5 1.500h11v8H6L2.500 13V9.500h-2z" fill={BLUE} stroke={NAVY} />
        </Svg>
      ),
    },
  ];
  return (
    <nav aria-label="任务窗格" className="absolute right-0 top-[58px] flex w-[33px] flex-col border-l border-t border-[#7f7f7f]">
      {items.map((item, index) => (
        <button
          key={item.label}
          type="button"
          aria-label={item.label}
          className={"flex items-center justify-center border-b border-[#7f7f7f] " + (index === 0 ? "h-[29px] bg-[#f7f7f7]" : "h-[30px] bg-[#d3d3d3]")}
        >
          {item.icon}
        </button>
      ))}
    </nav>
  );
}

function Workspace() {
  return (
    <main className="relative flex min-h-0 flex-1">
      <div className="flex min-w-0 flex-1 flex-col bg-[linear-gradient(to_right,#fbfbfd_24%,#e1e5f0_50%,#dadfea_75%,#c7ccda_100%)]">
        <TabRow />
        <div className="relative flex min-h-0 flex-1">
          <FeaturePanel />
          <section className="flex min-w-0 flex-1 flex-col bg-[linear-gradient(to_bottom,transparent_20%,#d3d9e8)] pl-9">
            <ViewToolbar />
            <div className="min-h-0 flex-1 overflow-hidden border-l border-t border-black bg-[#e6e6da]">
              <Drawing />
            </div>
          </section>
          <button type="button" aria-label="折叠面板" className="absolute left-[272px] top-[273px] flex h-[49px] w-3 items-center justify-center border border-l-0 border-[#7f7f7f] bg-[#f7f7f7] pb-0.5 pr-px">
            <span className="size-1.5 rounded-full border border-[#999] bg-[#ddd]" />
          </button>
        </div>
      </div>
      <div className="flex w-[17px] shrink-0 flex-col bg-[linear-gradient(to_bottom,#f7f7f7_58px,#f0f0f0_58px)] pt-[298px]">
        <IconButton label="向上滚动" className="h-[21px]"><Chevron d="M1.500 7L5 3.500 8.500 7" /></IconButton>
        <div className="ml-px flex-1 bg-[#cdcdcd]" />
        <div className="h-7" />
        <IconButton label="向下滚动" className="h-[21px]"><Chevron d="M1.500 3L5 6.500 8.500 3" /></IconButton>
      </div>
      <TaskPane />
    </main>
  );
}

function SheetBar() {
  const steps = [
    { label: "第一张", d: "M4 3v10M12 3v10L6 8z" },
    { label: "上一张", d: "M11 3v10L5 8z" },
    { label: "下一张", d: "M5 3v10l6-5z" },
    { label: "最后一张", d: "M12 3v10M4 3v10l6-5z" },
  ];
  return (
    <div className="flex h-[21px] shrink-0 items-stretch border-b border-[#7f7f7f] bg-[#f7f7f7]">
      <div className="flex w-[600px] shrink-0 border-r-2 border-t border-black border-t-[#7f7f7f]">
        {steps.map((step) => (
          <IconButton key={step.label} label={step.label} className="w-5 border border-[#8f8fa8] bg-[#a9a9bf]">
            <svg width="16" height="16" viewBox="0 0 16 16" aria-hidden="true"><path d={step.d} fill="#8989a0" stroke="#77778f" /></svg>
          </IconButton>
        ))}
        <button type="button" className="flex w-[85px] items-center justify-center gap-1 pl-0.5 text-[16px] leading-[19px] text-black">
          <svg width="14" height="14" viewBox="0 0 14 14" fill="none" aria-hidden="true" className="mb-1">
            <path d="M.5.500h8l5 5v7H.500z" fill="#fff" stroke="#222" /><path d="M8.500.500v5h5" stroke="#222" /><path d="M6.500 12V8.500h7M9 10.500h4" stroke="#3b5c9c" />
          </svg>
          图纸1
        </button>
        <button type="button" aria-label="添加图纸" className="flex w-[42px] items-center justify-center border-x border-[#7f7f7f] bg-[#d3d3d3] pb-[7px] pr-1.5">
          <svg width="15" height="12" viewBox="0 0 15 12" fill="none" aria-hidden="true">
            <path d="M3.500 3.500h10v5h-4v3H6l-2.500-2z" fill="#dfe9f2" stroke="#5d7286" /><path d="M10 8v3l3.500-3" fill="#fff" stroke="#5d7286" />
            <path d="M3.500 0v7M0 3.500h7M1 1l5 5M6 1L1 6" stroke="#f07a14" strokeWidth="1.200" /><circle cx="3.500" cy="3.500" r="1.300" fill="#ffe24a" />
          </svg>
        </button>
        <div className="w-[31px] bg-[#d3d3d3]" />
      </div>
      <div className="ml-0.5 flex min-w-0 flex-1 border-b-4 border-black bg-[#f0f0f0]">
        <IconButton label="向左滚动" className="w-[21px]"><Chevron d="M6.500 1.500L3 5l3.500 3.500" /></IconButton>
        <div className="mt-px min-w-0 flex-1 bg-[#cdcdcd]" />
        <div className="w-[50px]" />
        <IconButton label="向右滚动" className="w-5"><Chevron d="M3.500 1.500L7 5 3.500 8.500" /></IconButton>
      </div>
      <div className="w-[17px] shrink-0 bg-[#f0f0f0]" />
    </div>
  );
}

const UpMark = () => (
  <svg width="5" height="3" viewBox="0 0 5 3" aria-hidden="true"><path d="M0 3h5L2.500 0z" fill="#333" /></svg>
);

function StatusBar() {
  return (
    <footer className="relative flex h-[21px] shrink-0 items-center whitespace-nowrap bg-[#f7f7f7] pt-px text-[15px] leading-5 text-black">
      <span className="ml-px w-[388px] shrink-0">SOLIDWORKS Premium 2025 SP5.0</span>
      <span className="w-[109px] shrink-0">246.93mm</span>
      <span className="w-[88px] shrink-0">29.27mm</span>
      <span className="w-9 shrink-0 overflow-hidden">0mm</span>
      <span className="ml-[3px] w-[63px] shrink-0">欠定义</span>
      <span className="w-[181px] shrink-0">在编辑 剖面视图 P-P</span>
      <span className="w-[60px] shrink-0">1 : 1</span>
      <UpMark />
      <span className="ml-5 flex border-r border-[#cfcfcf] pb-px"><svg width="16" height="15" viewBox="1 0 16 18" aria-hidden="true"><rect x="4.500" y=".5" width="9" height="17" rx="2" fill="#333" /><circle cx="9" cy="5" r="3" fill="#e23a2e" /><circle cx="9" cy="13" r="3" fill="#44a23e" /></svg></span>
      <span className="ml-auto">自定义</span>
      <span className="ml-[22px] flex"><UpMark /></span>
      <span className="ml-[26px] flex">
        <Svg>
          <path d="M1 7l7-5 9 4-1 5-6 6-8-5z" fill="#c9c9c9" stroke="#444" /><path d="M1 7l8 5 8-6M9 12l1 5" stroke="#444" /><circle cx="9" cy="6.500" r="2.500" fill="#eee" stroke="#444" />
        </Svg>
      </span>
      <svg width="12" height="12" viewBox="0 0 12 12" className="ml-2.5 mr-1" aria-hidden="true">
        <path d="M8 0h3v3H8zM4 4h3v3H4zM8 4h3v3H8zM0 8h3v3H0zM4 8h3v3H4zM8 8h3v3H8z" fill="#bcbcbc" />
      </svg>
      <span className="pointer-events-none absolute -top-1 right-[18px] font-['Liberation_Mono',monospace] text-[12px] leading-5 text-[#e02828]">zhanshaoyi.com</span>
    </footer>
  );
}

export default function App() {
  return (
    <div className="flex h-screen flex-col overflow-hidden border border-[#1d4a6b] bg-white font-['Noto_Sans','Noto_Sans_CJK_SC',sans-serif]">
      <div className="h-2 shrink-0 bg-white" />
      <TitleBar />
      <Ribbon />
      <Workspace />
      <SheetBar />
      <StatusBar />
    </div>
  );
}
